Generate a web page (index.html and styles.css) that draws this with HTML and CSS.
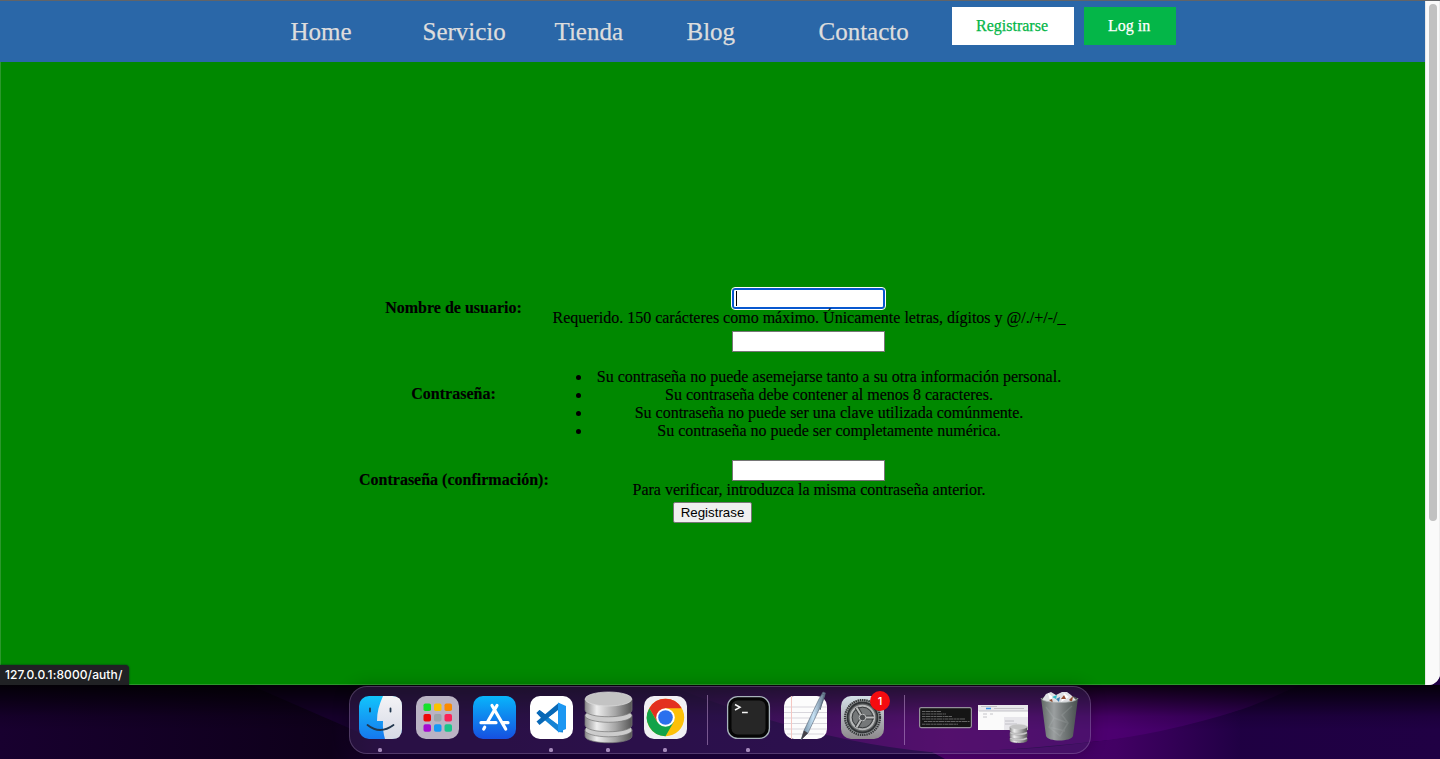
FILE: index.html
```html
<!DOCTYPE html>
<html lang="es">
<head>
<meta charset="utf-8">
<title>Registro</title>
<link rel="stylesheet" href="styles.css">
</head>
<body>
<main class="window">
  <div class="page">
    <nav class="navbar">
      <ul class="menu">
        <li>Home</li><li>Servicio</li><li>Tienda</li><li>Blog</li><li>Contacto</li>
      </ul>
      <div class="actions">
        <a class="btn btn-light">Registrarse</a>
        <a class="btn btn-green">Log in</a>
      </div>
    </nav>
    <form class="register">
      <table class="fields">
        <tr><th>Nombre de usuario:</th><td><div class="input focused"><span class="caret"></span></div><div class="help">Requerido. 150 carácteres como máximo. Únicamente letras, dígitos y @/./+/-/_</div></td></tr>
        <tr><th>Contraseña:</th><td><div class="input"></div><ul class="rules">
          <li>Su contraseña no puede asemejarse tanto a su otra información personal.</li>
          <li>Su contraseña debe contener al menos 8 caracteres.</li>
          <li>Su contraseña no puede ser una clave utilizada comúnmente.</li>
          <li>Su contraseña no puede ser completamente numérica.</li></ul></td></tr>
        <tr><th>Contraseña (confirmación):</th><td><div class="input"></div><div class="help">Para verificar, introduzca la misma contraseña anterior.</div></td></tr>
      </table>
      <button class="submit" type="button">Registrase</button>
    </form>
  </div>
  <div class="scrollbar"><div class="thumb"></div></div>
  <div class="status">127.0.0.1:8000/auth/</div>
</main>
<footer class="desktop">
  <svg class="wallpaper" width="1440" height="85" viewBox="0 674 1440 85">
    <defs>
      <linearGradient id="base" gradientUnits="userSpaceOnUse" x1="0" y1="0" x2="1440" y2="0"><stop offset="0" stop-color="#18002f"/><stop offset=".23" stop-color="#0e001a"/><stop offset=".27" stop-color="#18002f"/><stop offset=".62" stop-color="#1d0040"/><stop offset="1" stop-color="#200044"/></linearGradient>
      <linearGradient id="glow" gradientUnits="userSpaceOnUse" x1="640" y1="0" x2="1320" y2="0"><stop offset="0" stop-color="#6a0080" stop-opacity="0"/><stop offset=".45" stop-color="#5c0070"/><stop offset=".7" stop-color="#4c0070"/><stop offset="1" stop-color="#26004c"/></linearGradient>
      <linearGradient id="low" gradientUnits="userSpaceOnUse" x1="930" y1="0" x2="1240" y2="0"><stop offset="0" stop-color="#50006e"/><stop offset=".6" stop-color="#420064"/><stop offset="1" stop-color="#200044"/></linearGradient>
      <linearGradient id="shade" x1="0" y1="0" x2="0" y2="1"><stop offset="0" stop-color="#000" stop-opacity=".85"/><stop offset=".3" stop-color="#000" stop-opacity=".55"/><stop offset=".7" stop-color="#000" stop-opacity=".12"/><stop offset="1" stop-color="#000" stop-opacity="0"/></linearGradient>
    </defs>
    <path fill="url(#base)" d="M0 674H1440V759H0Z"/>
    <path fill="#18002f" d="M250 685L420 759H500V685Z"/>
    <path fill="url(#glow)" d="M640 674H1320Q1215 732 1091 742Q1000 752 930 752Q800 740 640 674Z"/>
    <path fill="url(#low)" d="M930 751Q1020 752 1091 742Q1160 735 1240 710V759H945Z"/>
    <path fill="url(#shade)" d="M0 685H1440V730H0Z"/>
  </svg>
  <div class="dock">
    <div class="app running"><svg viewBox="0 0 57 66"><defs><linearGradient id="fb" x2="0" y2="1"><stop stop-color="#12c4fb"/><stop offset="1" stop-color="#1678ee"/></linearGradient><linearGradient id="fw" x2="0" y2="1"><stop stop-color="#f4f3f6"/><stop offset="1" stop-color="#d5dae5"/></linearGradient></defs><rect x="7" y="9" width="43" height="43" rx="10" fill="url(#fb)"/><path d="M31 9C27 18 25 25 25 34H31C30.500 41 31.500 47 33 52H40Q50 52 50 42V19Q50 9 40 9Z" fill="url(#fw)"/><g fill="none" stroke="#22384e" stroke-width="1.800" stroke-linecap="round"><path d="M18 21.500V24.500M38.500 21.500V24.500"/><path d="M15.500 38Q28 48 41.500 38"/></g></svg></div>
    <div class="app"><svg viewBox="0 0 57 66"><rect x="7" y="9" width="43" height="43" rx="10" fill="#bab3c4"/><rect x="14.500" y="16.500" width="7.500" height="7.500" rx="1.800" fill="#16e22c"/><rect x="25" y="16.500" width="7.500" height="7.500" rx="1.800" fill="#fbc300"/><rect x="35.500" y="16.500" width="7.500" height="7.500" rx="1.800" fill="#fb8a00"/><rect x="14.500" y="27" width="7.500" height="7.500" rx="1.800" fill="#ed0707"/><rect x="25" y="27" width="7.500" height="7.500" rx="1.800" fill="#9ba5aa"/><rect x="35.500" y="27" width="7.500" height="7.500" rx="1.800" fill="#fa2358"/><rect x="14.500" y="37.300" width="7.500" height="7.500" rx="1.800" fill="#a50bd0"/><rect x="25" y="37.300" width="7.500" height="7.500" rx="1.800" fill="#1599f5"/><rect x="35.500" y="37.300" width="7.500" height="7.500" rx="1.800" fill="#19c58b"/></svg></div>
    <div class="app"><svg viewBox="0 0 57 66"><defs><linearGradient id="as" x2="0" y2="1"><stop stop-color="#08b5fb"/><stop offset="1" stop-color="#1650e0"/></linearGradient></defs><rect x="7" y="9" width="43" height="43" rx="10" fill="url(#as)"/><g stroke="#fff" stroke-width="3.200" stroke-linecap="round" fill="none"><path d="M31 18.500L21.500 35M18.700 40.200L17.700 42M26 18.500L39.700 42M15 35.700H30M37 35.700H42"/></g></svg></div>
    <div class="app running"><svg viewBox="0 0 57 66"><rect x="7" y="9" width="43" height="43" rx="10" fill="#fff"/><path d="M13.500 26L16.500 23L40 41V45.500L35.500 45Z" fill="#1583d4"/><path d="M13.500 34.500L35.500 16L40 19L16.500 38Z" fill="#0868b6"/><path d="M13.500 26L16.500 23L23 28L19 32Z" fill="#0868b6"/><path d="M35 15.500L43 19V42L35 45.500Z" fill="#1c97f2"/><path d="M35 24L25.500 30.500L35 37.500Z" fill="#fff"/></svg></div>
    <div class="app running"><svg viewBox="0 0 57 66"><defs><linearGradient id="db"><stop stop-color="#8c8c8c"/><stop offset=".25" stop-color="#ededed"/><stop offset=".65" stop-color="#a5a5a5"/><stop offset="1" stop-color="#555"/></linearGradient></defs><g id="disks" stroke="#777" stroke-width=".7"><path d="M5 43V49C5 58 52 58 52 49V43Z" fill="url(#db)"/><ellipse cx="28.500" cy="43" rx="23.500" ry="6.800" fill="#ccc"/><path d="M5 29V38C5 47 52 47 52 38V29Z" fill="url(#db)"/><ellipse cx="28.500" cy="28.500" rx="23.500" ry="6.800" fill="#ccc"/><path d="M5 12V23C5 32 52 32 52 23V12Z" fill="url(#db)"/><ellipse cx="28.500" cy="12" rx="23.300" ry="7" fill="#c3c3c3" stroke="#ddd"/></g></svg></div>
    <div class="app running"><svg viewBox="0 0 57 66"><rect x="7" y="9" width="43" height="43" rx="10" fill="#f1f0f4"/><circle cx="28.500" cy="30.500" r="18.700" fill="#fdc009"/><path d="M12.300 21.150A18.700 18.700 0 0 1 44.700 21.150H28.500L20.400 35Z" fill="#e3301f"/><path d="M12.300 21.150A18.700 18.700 0 0 0 28.500 49.200L36.600 35.200L20.400 35.200Z" fill="#13a349"/><circle cx="28.500" cy="30.500" r="9.300" fill="#fff"/><circle cx="28.500" cy="30.500" r="7.300" fill="#2b70ee"/></svg></div>
    <div class="divider"></div>
    <div class="app running"><svg viewBox="0 0 57 66"><rect x="7.600" y="9.600" width="41.800" height="41.800" rx="10" fill="#050505" stroke="#a8b3bb" stroke-width="1.300"/><rect x="11.500" y="13.500" width="34" height="34" rx="6" fill="#262626"/><path d="M15 17.500L20 20.300L15 23M22 25.500H27.800" fill="none" stroke="#f5f5f5" stroke-width="1.500"/></svg></div>
    <div class="app"><svg viewBox="0 0 57 66"><defs><linearGradient id="pen"><stop stop-color="#5d7a90"/><stop offset=".5" stop-color="#c7e2f5"/><stop offset="1" stop-color="#5a6c80"/></linearGradient></defs><rect x="7" y="9" width="43" height="43" rx="10" fill="#fcfcfc"/><path d="M7 20H50M7 25.500H50M7 31H50M7 36.500H50M7 42H50M10 47H47" stroke="#d8d6dc" stroke-width="1"/><path d="M14.500 9V52" stroke="#f4c7c2"/><path d="M46 5L48.500 6L46 14L31 46L24 53L27 43.500L42 12Z" fill="url(#pen)" stroke="#536273" stroke-width=".6"/><path d="M45 7L47.500 8L43 23" fill="none" stroke="#596b7d" stroke-width="1"/><path d="M27 43.500L31 46L24 53Z" fill="#454148"/></svg></div>
    <div class="app"><svg viewBox="0 0 57 66"><defs><linearGradient id="set" x2="0" y2="1"><stop stop-color="#d4e0e7"/><stop offset="1" stop-color="#8d898c"/></linearGradient></defs><rect x="7" y="9" width="43" height="43" rx="10" fill="url(#set)"/><circle cx="28.500" cy="30.500" r="18" fill="#9a9e9f"/><circle cx="28.500" cy="30.500" r="17.500" fill="none" stroke="#353739" stroke-width="2.200" stroke-dasharray="1.400 .8"/><circle cx="28.500" cy="30.500" r="15" fill="#626566" stroke="#303335" stroke-width="1.800"/><circle cx="28.500" cy="30.500" r="11.800" fill="#757879" stroke="#b6b8b8" stroke-width="2"/><circle cx="28.500" cy="30.500" r="10.300" fill="none" stroke="#383b3d"/><path d="M28.500 30.500H40M28.500 30.500L22.500 20.500M28.500 30.500L22.500 40.500" stroke="#3b3d3e" stroke-width="4"/><path d="M28.500 30.500H40M28.500 30.500L22.500 20.500M28.500 30.500L22.500 40.500" stroke="#bcbebe" stroke-width="2"/><circle cx="28.500" cy="30.500" r="3.300" fill="#4b4e50" stroke="#babcbc"/></svg><span class="badge">1</span></div>
    <div class="divider"></div>
    <div class="app"><svg viewBox="0 0 57 66"><rect x="2.600" y="20.600" width="51.800" height="20" rx="1.500" fill="#151515" stroke="#949099" stroke-width="1.200"/><g stroke="#777" stroke-width=".8" fill="none"><path d="M5 24.500H24M5 27H29M5 29.500H35M5 32H48M7 34.500H53M5 37.200H41" stroke-dasharray="3 .5 5 .6 2 .4"/></g></svg></div>
    <div class="app"><svg viewBox="0 0 57 66"><rect x="4" y="18" width="50" height="25" fill="#fafafa"/><path d="M4 18H54V24H4ZM30 30H54V43H30Z" fill="#e8e7eb"/><path d="M12 21.500H17" stroke="#3790e7" stroke-width="1.500"/><path d="M7 19.500H23M20 21.500H50M5 24H54M9 27H13M16 27H19M9 30H13M31 34H40M31 37H43" stroke="#b8b8bc" stroke-width=".8" fill="none"/><use href="#disks" transform="translate(34 35.300) scale(.37)"/></svg></div>
    <div class="app"><svg viewBox="0 0 57 66"><defs><linearGradient id="bin"><stop stop-color="#606865"/><stop offset=".35" stop-color="#9b9fa0"/><stop offset=".6" stop-color="#777c7c"/><stop offset="1" stop-color="#474f4e"/></linearGradient></defs><ellipse cx="28.500" cy="12" rx="18" ry="4" fill="#4f5554"/><path d="M11 13L15 7L20 5L25 8L31 5L36 5L40 8L45 13L40 17L15 17Z" fill="#dedfe3"/><path d="M17 6L22 10L19 14ZM33 6L38 10L30 15Z" fill="#fff"/><path d="M21 10L26 8L25 12Z" fill="#30bdc8"/><path d="M18 13L21 12L22 16ZM30 12L33 8L35 12ZM38 13L42 9L41 15Z" fill="#914c31"/><path d="M25 12L29 10L28 15Z" fill="#3e80b4"/><path d="M10 11C11 17 46 17 47 11L42 49C40 55 17 55 15 49Z" fill="url(#bin)"/><path d="M10 11C11 17 46 17 47 11" fill="none" stroke="#aab0ae" stroke-width=".8"/><path d="M15 20L23 31L18 40L29 49L37 36L31 28L41 19M23 31L37 36M18 40L34 44" fill="none" stroke="#d0d3d3" stroke-opacity=".14" stroke-width="1.500"/></svg></div>
  </div>
</footer>
</body>
</html>
```

FILE: styles.css
```css
* { box-sizing: border-box; }
body { margin: 0; width: 1440px; height: 759px; overflow: hidden; display: flex; flex-direction: column; background: #150028; font-family: "Liberation Serif", serif; font-size: 16px; line-height: 18px; color: #000; }
ul { list-style: none; margin: 0; padding: 0; }
.window { position: relative; z-index: 1; display: flex; height: 685px; flex: none; border-top: 1px solid #626468; border-radius: 0 0 12px 0; overflow: hidden; background: #fafafa; }
.page { width: 1425px; background: #008800; border-left: 1px solid #2c982c; border-bottom: 1px solid #2c982c; display: flex; flex-direction: column; }
.navbar { height: 61px; flex: none; display: flex; background: #2a67a8; margin-left: -1px; padding-left: 290px; -webkit-text-stroke: .25px currentColor; }
.menu { display: grid; grid-template-columns: repeat(5, 132px); width: 662px; font-size: 25px; line-height: 28px; color: #dddddd; padding: 17px 0 0 .5px; }
.actions { display: flex; gap: 10px; padding-top: 6px; align-items: flex-start; }
.btn { height: 38px; line-height: 38px; padding-left: 24px; }
.btn-light { width: 122px; background: #fff; color: #04b648; }
.btn-green { width: 92px; background: #04b648; color: #fff; }
.register { display: flex; flex-direction: column; align-items: center; padding-top: 223px; margin-left: -1px; }
.fields { width: 713px; border-spacing: 2px; table-layout: fixed; -webkit-text-stroke: .15px currentColor; }
.fields th, .fields td { padding: 1px; text-align: center; white-space: nowrap; }
.fields th { width: 191px; }
.input { width: 153px; height: 21px; margin: 0 auto; background: #fff; border: 1px solid #767676; transform: translateX(-1px); }
.focused { border: 2px solid #0757cf; border-radius: 3px; outline: 1px solid #fff; padding: 1px 2px; }
.help { position: relative; z-index: 1; }
.caret { display: block; width: 1px; height: 15px; background: #000; }
.rules { list-style: disc; margin: 16px 0; padding-left: 40px; }
.submit { width: 79px; height: 21px; padding: 0; margin: 0; border: 1px solid #767676; border-radius: 2px; background: #efefef; color: #000; font: 13.333px "Liberation Sans", Arial, sans-serif; }
.scrollbar { width: 15px; border-left: 1px solid #e8e8e8; border-right: 1px solid #ededed; background: #fafafa; padding: 3px 3px 0; }
.thumb { width: 8px; height: 517px; border-radius: 4px; background: #c1c1c1; }
.status { position: absolute; left: 0; bottom: 0; width: 129px; height: 20px; padding-left: 5px; border-radius: 0 4px 0 0; background: #202124; box-shadow: 0 0 2px #022; color: #fff; font: 500 12px/20px Inter, sans-serif; letter-spacing: .1px; white-space: nowrap; }
.desktop { position: relative; height: 74px; flex: none; display: flex; justify-content: center; padding-top: 1px; }
.wallpaper { position: absolute; left: 0; bottom: 0; }
.dock { position: relative; z-index: 2; width: 742px; height: 68px; display: flex; padding: 0 2px; border: 1px solid rgba(210, 190, 225, .24); border-radius: 18px; background: rgba(72, 43, 105, .38); box-shadow: 0 0 16px rgba(0, 0, 0, .25); }
.app { position: relative; width: 57px; height: 66px; flex: none; }
.app svg { display: block; width: 57px; height: 66px; }
.running::after { content: ""; position: absolute; left: 26px; top: 61px; width: 4px; height: 4px; border-radius: 1.5px; background: #a58abb; }
.divider { width: 26px; flex: none; display: flex; justify-content: center; padding: 8px 0; }
.divider::before { content: ""; width: 1px; background: rgba(196, 157, 212, .5); }
.badge { position: absolute; left: 36px; top: 4px; width: 20px; height: 20px; border-radius: 50%; background: #f60b10; color: #fff; font: 500 11px/20px Inter, sans-serif; text-align: center; }
```
